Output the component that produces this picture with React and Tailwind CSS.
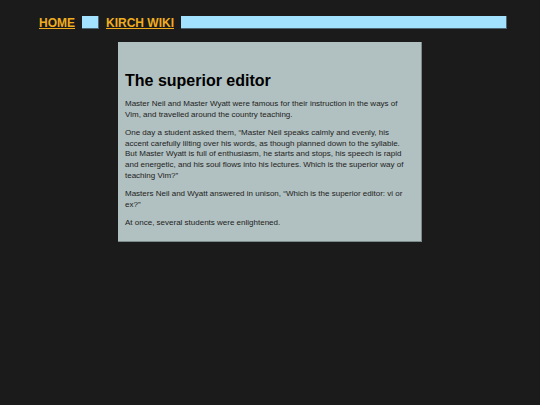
import React from "react";

const paragraphs = [
  "Master Neil and Master Wyatt were famous for their instruction in the ways of Vim, and travelled around the country teaching.",
  "One day a student asked them, \u201cMaster Neil speaks calmly and evenly, his accent carefully lilting over his words, as though planned down to the syllable. But Master Wyatt is full of enthusiasm, he starts and stops, his speech is rapid and energetic, and his soul flows into his lectures. Which is the superior way of teaching Vim?\u201d",
  "Masters Neil and Wyatt answered in unison, \u201cWhich is the superior editor: vi or ex?\u201d",
  "At once, several students were enlightened.",
];

const App = () => {
  return (
    <div className="min-h-screen bg-[#1b1b1b] font-['Liberation_Sans',Arial,sans-serif]">
      {/* Top nav */}
      <nav className="flex items-center gap-[7px] pl-[39px] pr-[33px] pt-[16px]">
        <a href="#" className="text-[12px] font-bold leading-[12px] text-[#f0ad1e] underline">
          HOME
        </a>
        <span className="h-[13px] w-[17px] border-b border-r border-[#4d6570] bg-[#a3e2ff]" />
        <a href="#" className="text-[12px] font-bold leading-[12px] text-[#f0ad1e] underline">
          KIRCH WIKI
        </a>
        <span className="h-[13px] flex-1 border-b border-r border-[#4d6570] bg-[#a3e2ff]" />
      </nav>

      {/* Article card */}
      <div className="ml-[118px] mt-[13px] w-[304px] border-b border-r border-[#7c8a8c] bg-[#b1c0c0] px-[7px] pb-[4px] pt-[30px]">
        <h1 className="mb-[9px] text-[16px] font-bold leading-[18px] text-black">The superior editor</h1>
        {paragraphs.map((text, i) => (
          <p key={i} className="mb-[8px] text-[8px] leading-[10.6px] text-[#1e1e1e]">
            {text}
          </p>
        ))}
      </div>
    </div>
  );
};

export default App;
